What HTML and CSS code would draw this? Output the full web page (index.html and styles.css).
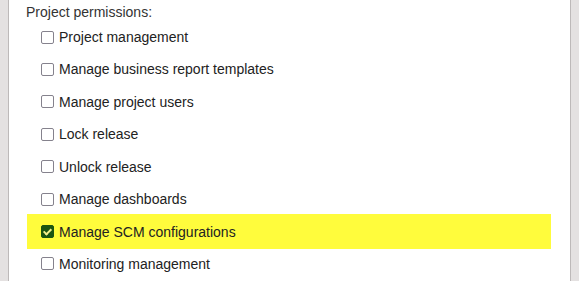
FILE: index.html
```html
<!DOCTYPE html>
<html lang="en">
<head>
    <meta charset="UTF-8">
    <title>Project permissions</title>
    <link rel="stylesheet" href="styles.css">
</head>
<body>
    <div class="panel">
        <div class="section-title">Project permissions:</div>
        <ul class="perm-list">
            <li class="perm-item"><label><input type="checkbox"> Project management</label></li>
            <li class="perm-item"><label><input type="checkbox"> Manage business report templates</label></li>
            <li class="perm-item"><label><input type="checkbox"> Manage project users</label></li>
            <li class="perm-item"><label><input type="checkbox"> Lock release</label></li>
            <li class="perm-item"><label><input type="checkbox"> Unlock release</label></li>
            <li class="perm-item"><label><input type="checkbox"> Manage dashboards</label></li>
            <li class="perm-item highlight"><label><input type="checkbox" checked> Manage SCM configurations</label></li>
            <li class="perm-item"><label><input type="checkbox"> Monitoring management</label></li>
        </ul>
    </div>
</body>
</html>
```

FILE: styles.css
```css
html, body {
    margin: 0;
    height: 100%;
}
body {
    background-color: #e4e1e1;
    font-family: Arial, "Liberation Sans", sans-serif;
    font-size: 14px;
    color: #222;
    overflow: hidden;
}
.panel {
    margin-left: 8px;
    width: 561px;
    min-height: 100%;
    background-color: #fff;
    border-left: 1px solid #bdb9b9;
    border-right: 1px solid #bdb9b9;
}
.section-title {
    padding: 3.5px 0 0 17px;
    line-height: 17px;
    height: 20.8px;
    box-sizing: border-box;
    color: #333;
}
.perm-list {
    list-style: none;
    margin: 0 0 0 18px;
    padding: 0;
    width: 524px;
}
.perm-item {
    height: 32.43px;
    display: flex;
    align-items: center;
    padding-left: 14px;
}
.perm-item label {
    display: flex;
    align-items: center;
    gap: 5px;
}
.perm-item input {
    appearance: none;
    -webkit-appearance: none;
    position: relative;
    margin: 0;
    width: 13px;
    height: 13px;
    box-sizing: border-box;
    border: 1.5px solid #85828d;
    border-radius: 2px;
    background-color: #fff;
}
.perm-item input:checked {
    background-color: #1b5511;
    border-color: #1b5511;
}
.perm-item input:checked::after {
    content: "";
    position: absolute;
    left: 3px;
    top: 0.5px;
    width: 3px;
    height: 6px;
    border: solid #f4f08a;
    border-width: 0 2px 2px 0;
    transform: rotate(45deg);
}
.highlight {
    background-color: #fffc3c;
    margin: -1.3px 0;
    padding-top: 1.3px;
    padding-bottom: 1.3px;
}
```
